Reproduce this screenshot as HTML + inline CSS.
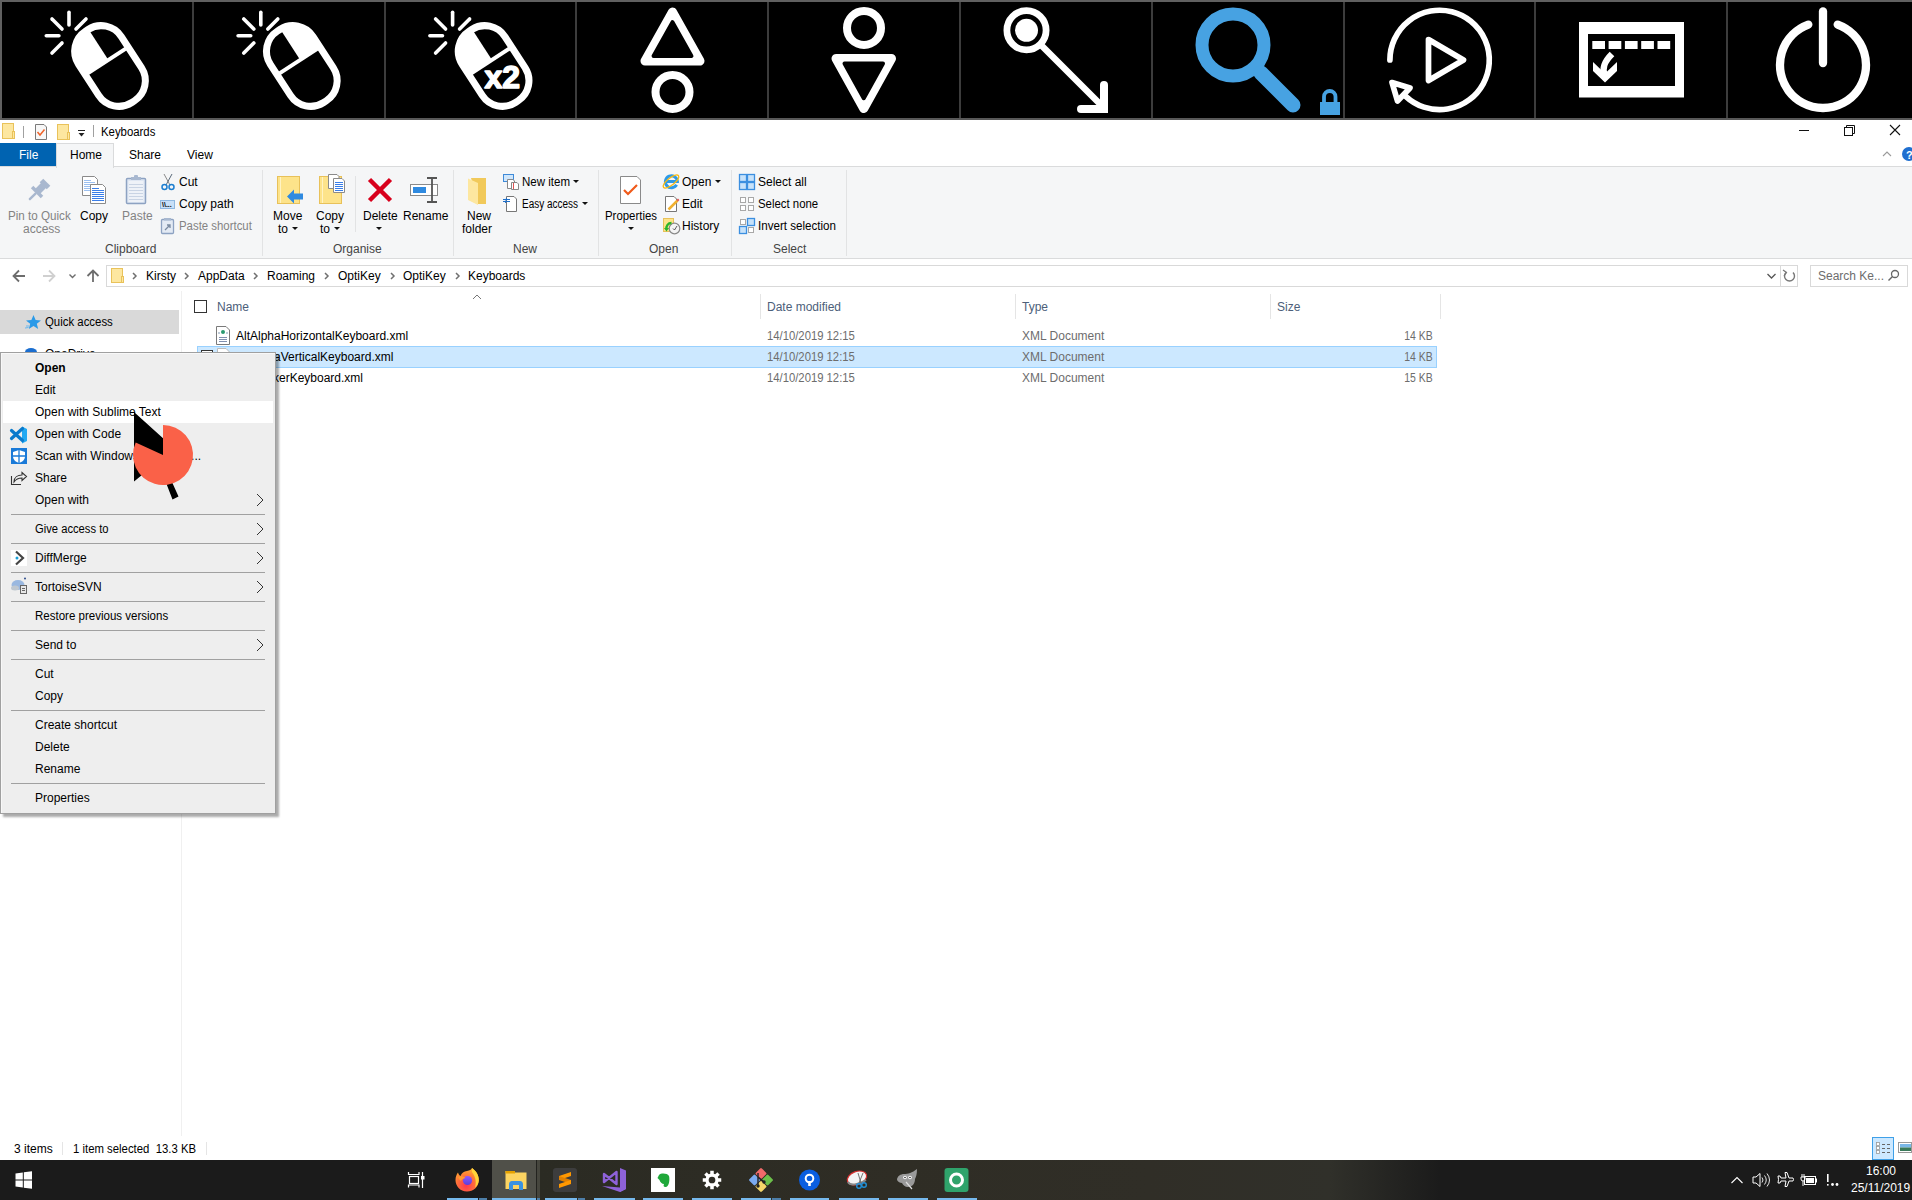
<!DOCTYPE html>
<html><head><meta charset="utf-8">
<style>
html,body{margin:0;padding:0;}
body{width:1912px;height:1200px;overflow:hidden;position:relative;background:#fff;font-family:"Liberation Sans",sans-serif;font-size:12px;color:#000;}
.a{position:absolute;}
.t{position:absolute;white-space:nowrap;line-height:14px;}
</style></head><body>

<!-- ===== OptiKey top bar ===== -->
<svg class="a" style="left:0;top:0" width="1912" height="120" viewBox="0 0 1912 120">
<rect x="0" y="0" width="1912" height="120" fill="#000"/>
<rect x="0" y="0" width="1912" height="2" fill="#606060"/>
<rect x="0" y="118" width="1912" height="2" fill="#585858"/>
<rect x="0" y="0" width="2" height="120" fill="#606060"/>
<g fill="#3c3c3c">
<rect x="192" y="2" width="2" height="116"/><rect x="384" y="2" width="2" height="116"/><rect x="575" y="2" width="2" height="116"/>
<rect x="767" y="2" width="2" height="116"/><rect x="959" y="2" width="2" height="116"/><rect x="1151" y="2" width="2" height="116"/>
<rect x="1343" y="2" width="2" height="116"/><rect x="1534" y="2" width="2" height="116"/><rect x="1726" y="2" width="2" height="116"/>
</g>

<defs>
<clipPath id="mc"><rect x="-24" y="-41" width="48" height="82" rx="23"/></clipPath>
<g id="spark" stroke="#fff" stroke-width="3.6" stroke-linecap="round">
<line x1="69" y1="25" x2="69" y2="12.3"/><line x1="58.9" y1="35.8" x2="46.3" y2="35.8"/>
<line x1="62" y1="29" x2="52" y2="19"/><line x1="76" y1="29" x2="86" y2="19"/>
<line x1="62" y1="43" x2="52" y2="53"/>
</g>
<g id="mouseo">
<rect x="-25.5" y="-42.5" width="51" height="85" rx="24" fill="none" stroke="#fff" stroke-width="7"/>
<line x1="-25" y1="-6" x2="25" y2="-6" stroke="#fff" stroke-width="4"/>
</g>
</defs>
<!-- icon1 left click -->
<use href="#spark"/>
<g transform="translate(110,66) rotate(-33)">
<rect x="-30" y="-50" width="32" height="44" fill="#fff" clip-path="url(#mc)"/>
<use href="#mouseo"/>
</g>
<!-- icon2 right click -->
<use href="#spark" x="191.8"/>
<g transform="translate(301.8,66) rotate(-33)">
<rect x="2" y="-50" width="32" height="44" fill="#fff" clip-path="url(#mc)"/>
<use href="#mouseo"/>
</g>
<!-- icon3 double click -->
<use href="#spark" x="383.6"/>
<g transform="translate(493.6,66) rotate(-33)">
<rect x="-30" y="-50" width="32" height="44" fill="#fff" clip-path="url(#mc)"/>
<use href="#mouseo"/>
</g>
<text x="484.5" y="88" fill="#fff" stroke="#fff" stroke-width="1.5" stroke-linejoin="round" font-family="Liberation Sans" font-weight="bold" font-size="32">x2</text>
<!-- icon4 triangle up + circle -->
<g fill="none" stroke="#fff" stroke-width="8">
<circle cx="672.5" cy="92" r="17"/>
<circle cx="864" cy="28" r="17"/>
</g>
<g stroke-linejoin="round">
<polygon points="672.5,12 700,61 645,61" fill="#fff" stroke="#fff" stroke-width="9"/>
<polygon points="672.5,22.2 691.45,56 653.55,56" fill="#000" stroke="#000" stroke-width="4"/>
<polygon points="836,58.5 891.5,58.5 863.75,108.5" fill="#fff" stroke="#fff" stroke-width="9"/>
<polygon points="844.5,63.5 883,63.5 863.75,98.2" fill="#000" stroke="#000" stroke-width="4"/>
</g>
<!-- icon6 drag -->
<g fill="none" stroke="#fff">
<circle cx="1026.5" cy="30.3" r="19.6" stroke-width="6.8"/>
<line x1="1041" y1="45" x2="1104" y2="108" stroke-width="6.5"/>
<path d="M1081,109 L1104,109 L1104,85" stroke-width="8" stroke-linecap="round" stroke-linejoin="miter"/>
</g>
<circle cx="1026.5" cy="30.3" r="11.5" fill="#fff"/>
<!-- icon7 magnifier -->
<g fill="none" stroke="#47a2e2">
<circle cx="1233" cy="45" r="31" stroke-width="13"/>
<line x1="1261" y1="73" x2="1293" y2="105" stroke-width="15" stroke-linecap="round"/>
<path d="M1324,102 V96.75 A5.75,5.75 0 0 1 1335.5,96.75 V102" stroke-width="3.8"/>
</g>
<rect x="1320" y="102" width="20" height="13" fill="#47a2e2"/>
<!-- icon8 replay -->
<g fill="none" stroke="#fff" stroke-width="5.7" stroke-linecap="round" stroke-linejoin="round">
<path d="M1389.9,60 A49.7,49.7 0 1 1 1405.7,96.3"/>
<polygon points="1392,82.5 1410,88 1397.5,101"/>
<polygon points="1428.5,39.5 1463.5,60 1428.5,80.5"/>
</g>
<!-- icon9 keyboard -->
<rect x="1579" y="22" width="105" height="75.5" fill="#fff"/>
<rect x="1588" y="34" width="87" height="52" fill="#000"/>
<g fill="#fff">
<rect x="1592.3" y="41" width="12.7" height="8"/><rect x="1608.6" y="41" width="12.7" height="8"/><rect x="1624.9" y="41" width="12.7" height="8"/>
<rect x="1641.2" y="41" width="12.7" height="8"/><rect x="1657.5" y="41" width="12.7" height="8"/>
<polygon points="1593,62 1605,73.5 1617,62 1617,71 1605,82.5 1593,71"/>
</g>
<path d="M1612,54 C1604,62 1602,68 1604.5,75" fill="none" stroke="#fff" stroke-width="6.5"/>
<!-- icon10 power -->
<g fill="none" stroke="#fff" stroke-width="8.3" stroke-linecap="round">
<path d="M1837.7,24.6 A43,43 0 1 1 1808.3,24.6"/>
<line x1="1823" y1="11.5" x2="1823" y2="63"/>
</g>
</svg>

<!-- ===== Title bar ===== -->
<div class="t" style="left:101px;top:125px;transform:scaleX(0.948);transform-origin:0 0">Keyboards</div>
<div class="a" style="left:23px;top:126px;width:1px;height:12px;background:#a0a0a0"></div>
<div class="a" style="left:93px;top:125px;width:1px;height:12px;background:#a0a0a0"></div>
<svg class="a" style="left:0;top:120px" width="100" height="24" viewBox="0 120 100 24">
<g>
<rect x="2.5" y="123.5" width="11" height="15" fill="#fde7a0" stroke="#e9c25a"/>
<rect x="12.5" y="131.5" width="2" height="7" fill="#fde7a0" stroke="#e9c25a"/>
<rect x="57.5" y="124.5" width="11" height="15" fill="#fde7a0" stroke="#e9c25a"/>
<rect x="67.5" y="132.5" width="2" height="7" fill="#fde7a0" stroke="#e9c25a"/>
<path d="M35.5,124.5 H44 L46.5,127 V139.5 H35.5 Z" fill="#f7f7f7" stroke="#7a7a7a"/>
<path d="M37.5,132 L40,135 L44.5,129.5" fill="none" stroke="#f0642a" stroke-width="1.5"/>
<rect x="78" y="130" width="7" height="1" fill="#222"/>
<path d="M78.5,133 H84.5 L81.5,136.5 Z" fill="#222"/>
</g>
</svg>
<!-- window controls -->
<svg class="a" style="left:1790px;top:120px" width="122" height="46" viewBox="1790 120 122 46">
<rect x="1799" y="130" width="10" height="1" fill="#111"/>
<rect x="1844.5" y="127.5" width="8" height="8" fill="none" stroke="#111"/>
<path d="M1846.5,127.5 V125.5 H1854.5 V133.5 H1852.5" fill="none" stroke="#111"/>
<path d="M1890,125 L1900,135 M1900,125 L1890,135" stroke="#111" stroke-width="1.1"/>
<path d="M1883,156 L1887,152 L1891,156" fill="none" stroke="#9a9a9a" stroke-width="1.1"/>
<circle cx="1909" cy="154" r="7" fill="#1f6fd0"/>
<text x="1906" y="158.5" fill="#fff" font-family="Liberation Sans" font-weight="bold" font-size="11">?</text>
</svg>

<!-- ===== Tabs ===== -->
<div class="a" style="left:0;top:143px;width:56px;height:23px;background:#0063b1"></div>
<div class="t" style="left:19px;top:148px;color:#fff">File</div>
<div class="a" style="left:56px;top:143px;width:56px;height:24px;background:#f5f6f7;border:1px solid #dadbdc;border-bottom:none;z-index:2"></div>
<div class="t" style="left:70px;top:148px;z-index:3">Home</div>
<div class="t" style="left:129px;top:148px">Share</div>
<div class="t" style="left:187px;top:148px">View</div>

<!-- ===== Ribbon ===== -->
<div class="a" style="left:0;top:166px;width:1912px;height:91px;background:#f5f6f7;border-top:1px solid #dadbdc;border-bottom:1px solid #dadbdc;"></div>
<div class="a" style="left:262px;top:170px;width:1px;height:86px;background:#e2e3e4"></div>
<div class="a" style="left:453px;top:170px;width:1px;height:86px;background:#e2e3e4"></div>
<div class="a" style="left:598px;top:170px;width:1px;height:86px;background:#e2e3e4"></div>
<div class="a" style="left:731px;top:170px;width:1px;height:86px;background:#e2e3e4"></div>
<div class="a" style="left:846px;top:170px;width:1px;height:86px;background:#e2e3e4"></div>
<div class="a" style="left:355px;top:176px;width:1px;height:56px;background:#e2e3e4"></div>
<div id="rtext">
<div class="t" style="left:8px;top:209px;color:#838383;transform:scaleX(0.97);transform-origin:0 0">Pin to Quick</div>
<div class="t" style="left:23px;top:222px;color:#838383">access</div>
<div class="t" style="left:80px;top:209px">Copy</div>
<div class="t" style="left:122px;top:209px;color:#838383">Paste</div>
<div class="t" style="left:179px;top:175px">Cut</div>
<div class="t" style="left:179px;top:197px">Copy path</div>
<div class="t" style="left:179px;top:219px;color:#838383;transform:scaleX(0.95);transform-origin:0 0">Paste shortcut</div>
<div class="t" style="left:105px;top:242px;color:#444">Clipboard</div>
<div class="t" style="left:273px;top:209px">Move</div>
<div class="t" style="left:278px;top:222px">to</div>
<div class="t" style="left:316px;top:209px">Copy</div>
<div class="t" style="left:320px;top:222px">to</div>
<div class="t" style="left:363px;top:209px">Delete</div>
<div class="t" style="left:403px;top:209px">Rename</div>
<div class="t" style="left:333px;top:242px;color:#444">Organise</div>
<div class="t" style="left:467px;top:209px">New</div>
<div class="t" style="left:462px;top:222px">folder</div>
<div class="t" style="left:522px;top:175px;transform:scaleX(0.96);transform-origin:0 0">New item</div>
<div class="t" style="left:522px;top:197px;transform:scaleX(0.83);transform-origin:0 0">Easy access</div>
<div class="t" style="left:513px;top:242px;color:#444">New</div>
<div class="t" style="left:605px;top:209px;transform:scaleX(0.95);transform-origin:0 0">Properties</div>
<div class="t" style="left:682px;top:175px">Open</div>
<div class="t" style="left:682px;top:197px">Edit</div>
<div class="t" style="left:682px;top:219px">History</div>
<div class="t" style="left:649px;top:242px;color:#444">Open</div>
<div class="t" style="left:758px;top:175px">Select all</div>
<div class="t" style="left:758px;top:197px;transform:scaleX(0.95);transform-origin:0 0">Select none</div>
<div class="t" style="left:758px;top:219px;transform:scaleX(0.966);transform-origin:0 0">Invert selection</div>
<div class="t" style="left:773px;top:242px;color:#444">Select</div>
</div>

<!-- ribbon icons -->
<svg class="a" style="left:0;top:166px" width="860" height="92" viewBox="0 166 860 92">
<!-- pin -->
<g transform="translate(39,190) rotate(45)">
<rect x="-5" y="-11" width="10" height="5" fill="#a9b8cf"/>
<rect x="-3.5" y="-7" width="7" height="9" fill="#a9b8cf"/>
<rect x="-7" y="1" width="14" height="3.5" fill="#a9b8cf"/>
<rect x="-1.2" y="4" width="2.4" height="10" rx="1" fill="#a9b8cf"/>
</g>
<!-- copy -->
<path d="M82.5,176.5 H94.5 L97.5,179.5 V195.5 H82.5 Z" fill="#fff" stroke="#8a8a8a"/>
<g stroke="#9cc0f0" stroke-width="1"><line x1="84" y1="180.5" x2="91" y2="180.5"/><line x1="84" y1="182.5" x2="95" y2="182.5"/><line x1="84" y1="184.5" x2="95" y2="184.5"/><line x1="84" y1="186.5" x2="95" y2="186.5"/><line x1="84" y1="188.5" x2="95" y2="188.5"/><line x1="84" y1="190.5" x2="95" y2="190.5"/></g>
<path d="M90.5,184.5 H102.5 L105.5,187.5 V203.5 H90.5 Z" fill="#fff" stroke="#8a8a8a"/>
<g stroke="#3a7ee8" stroke-width="1"><line x1="92" y1="188.5" x2="99" y2="188.5"/><line x1="92" y1="190.5" x2="104" y2="190.5"/><line x1="92" y1="192.5" x2="104" y2="192.5"/><line x1="92" y1="194.5" x2="104" y2="194.5"/><line x1="92" y1="196.5" x2="104" y2="196.5"/><line x1="92" y1="198.5" x2="104" y2="198.5"/><line x1="92" y1="200.5" x2="104" y2="200.5"/></g>
<!-- paste -->
<rect x="126.5" y="178.5" width="19" height="25" rx="1" fill="#dfe7f3" stroke="#8da2c2" stroke-width="1.5"/>
<rect x="128.5" y="181" width="15" height="21" fill="#eef2f8"/>
<g stroke="#c9d4e4"><line x1="129" y1="184.5" x2="143" y2="184.5"/><line x1="129" y1="187.5" x2="143" y2="187.5"/><line x1="129" y1="190.5" x2="143" y2="190.5"/><line x1="129" y1="193.5" x2="143" y2="193.5"/><line x1="129" y1="196.5" x2="143" y2="196.5"/><line x1="129" y1="199.5" x2="143" y2="199.5"/></g>
<rect x="131" y="177" width="10" height="3" fill="#a8b8d0"/><rect x="134" y="175" width="4" height="3" rx="1" fill="#a8b8d0"/>
<!-- cut -->
<g fill="none"><line x1="164" y1="174" x2="170" y2="185" stroke="#8a8a8a"/><line x1="172" y1="174" x2="166" y2="185" stroke="#5a6a7a"/>
<circle cx="164.5" cy="187" r="2.5" stroke="#1e7fd0" stroke-width="1.5"/><circle cx="171.5" cy="187" r="2.5" stroke="#1e7fd0" stroke-width="1.5"/></g>
<!-- copy path -->
<rect x="160.5" y="200.5" width="14" height="8" fill="#c8e0f8" stroke="#8fb8e0"/>
<text x="162" y="207" font-family="Liberation Sans" font-size="7" font-weight="bold" fill="#000">\\...</text>
<!-- paste shortcut -->
<rect x="161.5" y="219.5" width="12" height="14" rx="1" fill="#e3eaf4" stroke="#8da2c2" stroke-width="1.3"/>
<rect x="164" y="218" width="7" height="2.5" fill="#a8b8d0"/>
<path d="M165,230 L170,225 M167,225 H170 V228" fill="none" stroke="#7a8aa0" stroke-width="1.3"/>
<!-- move to -->
<rect x="277.5" y="176.5" width="22" height="27" fill="#fde38a" stroke="#e8c15a"/>
<line x1="280.5" y1="177" x2="280.5" y2="203" stroke="#fff3c4"/>
<path d="M287,196.5 L294,189.5 V193.5 H303 V199.5 H294 V203.5 Z" fill="#2f8ae0"/>
<!-- copy to -->
<rect x="319.5" y="176.5" width="22" height="27" fill="#fde38a" stroke="#e8c15a"/>
<line x1="322.5" y1="177" x2="322.5" y2="203" stroke="#fff3c4"/>
<path d="M328.5,174.5 H337 L339,176.5 V188.5 H328.5 Z" fill="#fff" stroke="#8a8a8a"/>
<path d="M333.5,178.5 H342 L344.5,181 V192.5 H333.5 Z" fill="#fff" stroke="#8a8a8a"/>
<g stroke="#3a7ee8"><line x1="335" y1="182.5" x2="343" y2="182.5"/><line x1="335" y1="184.5" x2="343" y2="184.5"/><line x1="335" y1="186.5" x2="343" y2="186.5"/><line x1="335" y1="188.5" x2="343" y2="188.5"/><line x1="335" y1="190.5" x2="343" y2="190.5"/></g>
<!-- dropdown arrows -->
<g fill="#111">
<path d="M292,227 H298 L295,230 Z"/><path d="M334,227 H340 L337,230 Z"/><path d="M376,227 H382 L379,230 Z"/>
<path d="M573,180 H579 L576,183 Z"/><path d="M582,202 H588 L585,205 Z"/>
<path d="M628,227 H634 L631,230 Z"/><path d="M715,180 H721 L718,183 Z"/>
</g>
<!-- delete -->
<path d="M369.5,179.5 L390.5,200.5 M390.5,179.5 L369.5,200.5" stroke="#d8001c" stroke-width="4.5"/>
<!-- rename -->
<rect x="410.5" y="184.5" width="27" height="11" fill="#fff" stroke="#8a8a8a"/>
<rect x="413" y="187" width="13" height="6" fill="#2f8ae0"/>
<path d="M427,178 H437 M427,202 H437 M432,178 V202" stroke="#555" stroke-width="1.8" fill="none"/>
<!-- new folder -->
<path d="M471,178 H486 V204 H478 V202 Z" fill="#f1c95a"/>
<path d="M468,178.5 L478,183 V205 L468,200 Z" fill="#fde7a0"/>
<!-- new item -->
<rect x="503.5" y="174.5" width="10" height="7" fill="#cfe6fb" stroke="#3e8ad8"/>
<path d="M507.5,179.5 H513 L514.5,181 V188.5 H507.5 Z" fill="#fff" stroke="#888"/>
<path d="M511.5,182.5 H517 L518.5,184 V189.5 H511.5 Z" fill="#fff" stroke="#888"/>
<line x1="513.5" y1="183" x2="513.5" y2="189" stroke="#e05050"/>
<!-- easy access -->
<path d="M506.5,196.5 H514 L516.5,199 V211.5 H506.5 Z" fill="#fff" stroke="#777"/>
<g stroke="#1e6ec8"><line x1="503" y1="199.5" x2="510" y2="199.5"/><line x1="503" y1="201.5" x2="510" y2="201.5"/><line x1="506.5" y1="198" x2="505.5" y2="203"/></g>
<!-- properties -->
<path d="M620.5,176.5 H637 L640.5,180 V203.5 H620.5 Z" fill="#fff" stroke="#8a8a8a"/>
<path d="M624,190 L628,194 L637,185" fill="none" stroke="#f05a1a" stroke-width="2.2"/>
<!-- IE open -->
<path d="M676.6,184.8 A6,6 0 1 1 677.4,181.5 H666" fill="none" stroke="#2d9ae8" stroke-width="3"/>
<ellipse cx="671" cy="181.5" rx="9.5" ry="3.6" transform="rotate(-38 671 181.5)" fill="none" stroke="#f5b914" stroke-width="1.3"/>
<!-- edit -->
<path d="M665.5,196.5 H674 L676.5,199 V211.5 H665.5 Z" fill="#fff" stroke="#777"/>
<path d="M668.5,209.5 L677.5,200.5" stroke="#f0b030" stroke-width="2.5"/>
<rect x="677" y="199" width="2" height="2" fill="#e05050" transform="rotate(45 678 200)"/>
<!-- history -->
<rect x="663.5" y="218.5" width="10" height="13" fill="#fde38a" stroke="#e8c15a"/>
<circle cx="674.5" cy="228.5" r="5.3" fill="#f4f4f4" stroke="#8a8a8a" stroke-width="1.2"/>
<path d="M673,228.5 L674.5,230 L677,226" fill="none" stroke="#333" stroke-width="0.8"/>
<path d="M671.5,223 C668,223 666,226 666.5,229" fill="none" stroke="#2ab52a" stroke-width="2.4"/>
<path d="M664,228 L669,228 L666.5,231.5 Z" fill="#2ab52a"/>
<!-- select all -->
<g fill="#c7e2fa" stroke="#3b8fe0" stroke-width="1.3">
<rect x="739.5" y="174.5" width="7" height="7"/><rect x="747.5" y="174.5" width="7" height="7"/>
<rect x="739.5" y="182.5" width="7" height="7"/><rect x="747.5" y="182.5" width="7" height="7"/>
<rect x="747.5" y="218.5" width="7" height="7"/><rect x="739.5" y="226.5" width="7" height="7"/>
</g>
<g fill="#fff" stroke="#a8a8a8">
<rect x="740.5" y="197.5" width="5" height="5"/><rect x="748.5" y="197.5" width="5" height="5"/>
<rect x="740.5" y="205.5" width="5" height="5"/><rect x="748.5" y="205.5" width="5" height="5"/>
<rect x="740.5" y="219.5" width="5" height="5"/><rect x="748.5" y="227.5" width="5" height="5"/>
</g>
</svg>

<!-- ===== Address bar ===== -->
<svg class="a" style="left:0;top:259px" width="1912" height="32" viewBox="0 259 1912 32">
<g fill="none" stroke="#6d6d6d" stroke-width="1.8">
<path d="M13.5,276 H25 M19,270.5 L13.5,276 L19,281.5"/>
</g>
<g fill="none" stroke="#d0d0d0" stroke-width="1.8">
<path d="M43,276 H54.5 M49,270.5 L54.5,276 L49,281.5"/>
</g>
<path d="M69.5,274.5 L72.5,277.5 L75.5,274.5" fill="none" stroke="#6d6d6d" stroke-width="1.4"/>
<path d="M93,282 V271 M87.5,276 L93,270.5 L98.5,276" fill="none" stroke="#6d6d6d" stroke-width="1.8"/>
<rect x="106.5" y="265.5" width="1691" height="21" fill="#fff" stroke="#d9d9d9"/>
<line x1="1780.5" y1="266" x2="1780.5" y2="286" stroke="#d9d9d9"/>
<rect x="111.5" y="268.5" width="11" height="14" fill="#fde7a0" stroke="#e9c25a"/>
<rect x="121.5" y="276.5" width="2" height="6" fill="#fde7a0" stroke="#e9c25a"/>
<g fill="none" stroke="#707070" stroke-width="1.5">
<path d="M133,273 L136,276 L133,279"/><path d="M185,273 L188,276 L185,279"/><path d="M254,273 L257,276 L254,279"/>
<path d="M325,273 L328,276 L325,279"/><path d="M391,273 L394,276 L391,279"/><path d="M456,273 L459,276 L456,279"/>
</g>
<path d="M1767.5,274 L1771.5,278 L1775.5,274" fill="none" stroke="#555" stroke-width="1.3"/>
<path d="M1793,272.5 A5,5 0 1 1 1786,272.5" fill="none" stroke="#777" stroke-width="1.4"/>
<path d="M1783,270 L1786.5,272.5 L1784,276" fill="none" stroke="#777" stroke-width="1.2"/>
<rect x="1810.5" y="265.5" width="97" height="21" fill="#fff" stroke="#d9d9d9"/>
<circle cx="1895" cy="274" r="3.5" fill="none" stroke="#666" stroke-width="1.3"/>
<line x1="1892.5" y1="276.5" x2="1888.5" y2="280.5" stroke="#666" stroke-width="1.5"/>
</svg>
<div class="t" style="left:146px;top:269px">Kirsty</div>
<div class="t" style="left:198px;top:269px">AppData</div>
<div class="t" style="left:267px;top:269px">Roaming</div>
<div class="t" style="left:338px;top:269px">OptiKey</div>
<div class="t" style="left:403px;top:269px">OptiKey</div>
<div class="t" style="left:468px;top:269px">Keyboards</div>
<div class="t" style="left:1818px;top:269px;color:#6d6d6d">Search Ke...</div>

<!-- ===== Nav pane ===== -->
<div class="a" style="left:0;top:310px;width:179px;height:24px;background:#d9d9d9"></div>
<svg class="a" style="left:20px;top:310px" width="30" height="50" viewBox="20 310 30 50">
<path d="M33.5,315 L35.6,320 L41,320.4 L36.8,323.8 L38.2,329 L33.5,326.1 L28.8,329 L30.2,323.8 L26,320.4 L31.4,320 Z" fill="#2a9ae8"/>
<path d="M26,326 L29,326 M25,328 L28.5,327.5" stroke="#6ab8f0" stroke-width="1"/>
<ellipse cx="31" cy="352" rx="6" ry="4" fill="#1a6ed0"/>
</svg>
<div class="t" style="left:45px;top:315px;transform:scaleX(0.95);transform-origin:0 0">Quick access</div>
<div class="t" style="left:45px;top:347px">OneDrive</div>
<div class="a" style="left:181px;top:291px;width:1px;height:845px;background:#f0f0f0"></div>

<!-- ===== File list ===== -->
<div class="a" style="left:194px;top:300px;width:11px;height:11px;border:1px solid #333;background:#fff"></div>
<div class="t" style="left:217px;top:300px;color:#4c607a">Name</div>
<svg class="a" style="left:470px;top:290px" width="14" height="10" viewBox="470 290 14 10"><path d="M473,299 L477,295 L481,299" fill="none" stroke="#777" stroke-width="1"/></svg>
<div class="a" style="left:760px;top:294px;width:1px;height:25px;background:#e5e5e5"></div>
<div class="a" style="left:1015px;top:294px;width:1px;height:25px;background:#e5e5e5"></div>
<div class="a" style="left:1270px;top:294px;width:1px;height:25px;background:#e5e5e5"></div>
<div class="a" style="left:1440px;top:294px;width:1px;height:25px;background:#e5e5e5"></div>
<div class="t" style="left:767px;top:300px;color:#4c607a">Date modified</div>
<div class="t" style="left:1022px;top:300px;color:#4c607a">Type</div>
<div class="t" style="left:1277px;top:300px;color:#4c607a">Size</div>

<div class="a" style="left:197px;top:346px;width:1238px;height:20px;background:#cce8ff;border:1px solid #99d1ff"></div>
<svg class="a" style="left:200px;top:325px" width="40" height="65" viewBox="200 325 40 65">
<path d="M216.5,326.5 H226 L229.5,330 V344.5 H216.5 Z" fill="#fff" stroke="#7a7a7a"/>
<circle cx="223" cy="332" r="2" fill="#2a9a70"/>
<path d="M219.5,332 L218.5,333 L219.5,334 M226.5,332 L227.5,333 L226.5,334" fill="none" stroke="#6080a0" stroke-width="0.8"/>
<g stroke="#8090b0" stroke-width="1"><line x1="219" y1="337.5" x2="227" y2="337.5"/><line x1="219" y1="339.5" x2="227" y2="339.5"/><line x1="219" y1="341.5" x2="227" y2="341.5"/></g>
</svg>
<div class="a" style="left:201px;top:350px;width:10px;height:10px;border:1.5px solid #333;background:#fff"></div>
<svg class="a" style="left:215px;top:347px" width="16" height="18" viewBox="215 347 16 18"><path d="M217.5,348.5 H226 L229.5,352 V364.5 H217.5 Z" fill="#fff" stroke="#bbb"/></svg>
<div class="t" style="left:236px;top:329px">AltAlphaHorizontalKeyboard.xml</div>
<div class="t" style="left:236px;top:350px">AltAlphaVerticalKeyboard.xml</div>
<div class="t" style="right:1549px;top:371px">AltAlphaSpeakerKeyboard.xml</div>
<div class="t" style="left:767px;top:329px;color:#6d6d6d;transform:scaleX(0.94);transform-origin:0 0">14/10/2019 12:15</div>
<div class="t" style="left:767px;top:350px;color:#6d6d6d;transform:scaleX(0.94);transform-origin:0 0">14/10/2019 12:15</div>
<div class="t" style="left:767px;top:371px;color:#6d6d6d;transform:scaleX(0.94);transform-origin:0 0">14/10/2019 12:15</div>
<div class="t" style="left:1022px;top:329px;color:#6d6d6d">XML Document</div>
<div class="t" style="left:1022px;top:350px;color:#6d6d6d">XML Document</div>
<div class="t" style="left:1022px;top:371px;color:#6d6d6d">XML Document</div>
<div class="t" style="right:479px;top:329px;color:#6d6d6d;transform:scaleX(0.87);transform-origin:100% 0">14 KB</div>
<div class="t" style="right:479px;top:350px;color:#6d6d6d;transform:scaleX(0.87);transform-origin:100% 0">14 KB</div>
<div class="t" style="right:479px;top:371px;color:#6d6d6d;transform:scaleX(0.87);transform-origin:100% 0">15 KB</div>

<!-- ===== Status bar ===== -->
<div class="t" style="left:14px;top:1142px">3 items</div>
<div class="a" style="left:62px;top:1142px;width:1px;height:13px;background:#e5e5e5"></div>
<div class="t" style="left:73px;top:1142px;transform:scaleX(0.946);transform-origin:0 0">1 item selected&nbsp; 13.3 KB</div>
<div class="a" style="left:206px;top:1142px;width:1px;height:13px;background:#e5e5e5"></div>
<svg class="a" style="left:1870px;top:1136px" width="42" height="24" viewBox="1870 1136 42 24">
<rect x="1872.5" y="1137.5" width="21" height="22" fill="#cce8ff" stroke="#3fa0e8"/>
<g fill="#fff" stroke="#999" stroke-width="0.8"><rect x="1876.5" y="1142.5" width="3" height="3"/><rect x="1876.5" y="1146.5" width="3" height="3"/><rect x="1876.5" y="1150.5" width="3" height="3"/></g>
<g stroke="#666" stroke-width="1"><line x1="1882" y1="1144.5" x2="1885" y2="1144.5"/><line x1="1887" y1="1144.5" x2="1890" y2="1144.5"/><line x1="1882" y1="1148.5" x2="1885" y2="1148.5"/><line x1="1887" y1="1148.5" x2="1890" y2="1148.5"/><line x1="1882" y1="1152.5" x2="1885" y2="1152.5"/><line x1="1887" y1="1152.5" x2="1890" y2="1152.5"/></g>
<rect x="1898.5" y="1142.5" width="13" height="10" fill="#fff" stroke="#999"/>
<rect x="1900" y="1144" width="11" height="3.5" fill="#7ab8e8"/><rect x="1900" y="1147.5" width="11" height="3.5" fill="#3a7a5a"/>
</svg>

<!-- ===== Context menu ===== -->
<div class="a" style="left:0;top:352px;width:274px;height:460px;background:#eeeeee;border:1px solid #a0a0a0;box-shadow:3px 3px 2px rgba(0,0,0,0.33), inset 1px 1px 0 #f8f8f8;z-index:10">
<div class="a" style="left:2px;top:48px;width:270px;height:22px;background:#fff"></div>
<div class="t" style="left:34px;top:8px;font-weight:bold">Open</div>
<div class="t" style="left:34px;top:30px">Edit</div>
<div class="t" style="left:34px;top:52px">Open with Sublime Text</div>
<div class="t" style="left:34px;top:74px">Open with Code</div>
<div class="t" style="left:34px;top:96px">Scan with Windows Defender...</div>
<div class="t" style="left:34px;top:118px">Share</div>
<div class="t" style="left:34px;top:140px">Open with</div>
<div class="t" style="left:34px;top:169px;transform:scaleX(0.934);transform-origin:0 0">Give access to</div>
<div class="t" style="left:34px;top:198px">DiffMerge</div>
<div class="t" style="left:34px;top:227px">TortoiseSVN</div>
<div class="t" style="left:34px;top:256px;transform:scaleX(0.96);transform-origin:0 0">Restore previous versions</div>
<div class="t" style="left:34px;top:285px">Send to</div>
<div class="t" style="left:34px;top:314px">Cut</div>
<div class="t" style="left:34px;top:336px">Copy</div>
<div class="t" style="left:34px;top:365px">Create shortcut</div>
<div class="t" style="left:34px;top:387px">Delete</div>
<div class="t" style="left:34px;top:409px">Rename</div>
<div class="t" style="left:34px;top:438px">Properties</div>
<svg class="a" style="left:0;top:0" width="274" height="460" viewBox="1 353 274 460">
<g fill="#a0a0a0">
<rect x="11" y="514" width="254" height="1"/><rect x="11" y="543" width="254" height="1"/><rect x="11" y="572" width="254" height="1"/>
<rect x="11" y="601" width="254" height="1"/><rect x="11" y="630" width="254" height="1"/><rect x="11" y="659" width="254" height="1"/>
<rect x="11" y="710" width="254" height="1"/><rect x="11" y="783" width="254" height="1"/>
</g>
<g fill="none" stroke="#333" stroke-width="1">
<path d="M257,494 L263,500 L257,506"/><path d="M257,523 L263,529 L257,535"/><path d="M257,552 L263,558 L257,564"/>
<path d="M257,581 L263,587 L257,593"/><path d="M257,639 L263,645 L257,651"/>
</g>
<!-- vscode icon -->
<path d="M22,426.5 L27,429 V441 L22,443.5 Z" fill="#23a9f2"/>
<path d="M11.5,430.5 L22.5,440.5 M11.5,438.5 L22.5,428.5" stroke="#0a7acc" stroke-width="3.2" stroke-linecap="round"/>
<!-- defender icon -->
<rect x="11" y="448" width="16" height="16" fill="#1a7ad8"/>
<path d="M19,450 L25,452 V456 C25,460 22,462 19,463 C16,462 13,460 13,456 V452 Z" fill="#fff"/>
<path d="M19,450 V463 M13,456 H25" stroke="#1a7ad8" stroke-width="1.3"/>
<!-- share icon -->
<path d="M11.5,476 V484.5 H21" fill="none" stroke="#333" stroke-width="1.1"/>
<path d="M14,482 C14,477 18,475 22,475 V472.5 L26.5,476.5 L22,480.5 V478 C19,478 16,479 14,482 Z" fill="none" stroke="#333" stroke-width="1.1"/>
<!-- diffmerge icon -->
<rect x="11" y="550" width="16" height="16" fill="#fff"/>
<path d="M16,551.5 L23,558 L16,564.5" fill="none" stroke="#444" stroke-width="2.2"/>
<circle cx="17" cy="558" r="1.5" fill="#1aa0d8"/>
<!-- tortoisesvn icon -->
<ellipse cx="18" cy="585" rx="6.5" ry="5" fill="#9ab8e0"/>
<ellipse cx="15" cy="588" rx="4" ry="2.5" fill="#c0c8d0"/>
<rect x="20.5" y="585.5" width="6" height="8" fill="#e8e8e8" stroke="#666"/>
<line x1="22" y1="588.5" x2="25" y2="588.5" stroke="#666"/><line x1="22" y1="590.5" x2="25" y2="590.5" stroke="#666"/>
<circle cx="25" cy="578.5" r="1" fill="#2a4a8a"/>
</svg>
</div>

<!-- ===== Gaze cursor ===== -->
<svg class="a" style="left:120px;top:400px;z-index:20" width="90" height="110" viewBox="120 400 90 110">
<polygon points="134,412 134,481.5 158,462 172.5,499.5 178.5,496.5 163,462 186,459" fill="#000"/>
<path d="M163,455 L163,425 A30,30 0 1 1 135.7,442.6 Z" fill="#fa6148"/>
</svg>

<!-- ===== Taskbar ===== -->
<div class="a" style="left:0;top:1160px;width:1912px;height:40px;background:linear-gradient(to right,#1b1b1b 0px,#1b1b1b 536px,#2b2b23 537px,#2f2d25 900px,#302e27 1150px,#30302a 1330px,#1b1b1b 1440px,#1b1b1b 1912px)"></div>
<div class="a" style="left:492px;top:1160px;width:44px;height:40px;background:#505049"></div>
<div class="a" style="left:537px;top:1160px;width:3px;height:40px;background:#46463e"></div>
<svg class="a" style="left:0;top:1160px" width="1912" height="40" viewBox="0 1160 1912 40">
<!-- windows logo -->
<path d="M15.5,1173.5 L22.8,1172.5 V1179.6 H15.5 Z M23.8,1172.3 L32,1171.3 V1179.6 H23.8 Z M15.5,1180.5 H22.8 V1187.6 L15.5,1186.6 Z M23.8,1180.5 H32 V1188.8 L23.8,1187.8 Z" fill="#fff"/>
<!-- task view -->
<path d="M408.5,1172 V1174.5 H419 V1172 M408.5,1187.5 V1185 H419 V1187.5" fill="none" stroke="#fff" stroke-width="1.2"/>
<rect x="409.5" y="1176.5" width="9" height="7" fill="none" stroke="#fff" stroke-width="1.2"/>
<line x1="422.5" y1="1172" x2="422.5" y2="1188" stroke="#fff" stroke-width="1.2"/>
<rect x="421" y="1176" width="3.5" height="3.5" fill="#fff"/>
<!-- firefox -->
<defs>
<radialGradient id="ffg" cx="0.45" cy="0.75" r="0.8"><stop offset="0" stop-color="#ff3750"/><stop offset="0.5" stop-color="#ff7139"/><stop offset="1" stop-color="#ffbd2e"/></radialGradient>
<linearGradient id="ffp" x1="0" y1="0" x2="0" y2="1"><stop offset="0" stop-color="#9059ff"/><stop offset="1" stop-color="#5b3ed8"/></linearGradient>
</defs>
<path d="M472,1168 C476,1171 479,1175 478.8,1180.5 C478.5,1187 473.5,1191.5 467,1191.5 C460,1191.5 455.5,1186 455.5,1180 C455.5,1177 456.5,1174.5 458,1172.5 C458.5,1174.5 459.5,1175.5 460.5,1176 C461.5,1173 464,1171.5 467,1171 C469.5,1170.5 471.5,1169.5 472,1168 Z" fill="url(#ffg)"/>
<path d="M472,1168 C476,1171 479,1175 478.8,1180.5 C478.5,1183 477,1186 475,1187.5 C476.5,1183 476,1177 472,1172 Z" fill="#ffd43a"/>
<circle cx="467.5" cy="1180.5" r="4.6" fill="url(#ffp)"/>
<path d="M458,1177 C460,1175.5 463.5,1176 465.5,1178 C463,1178.5 461.5,1179.5 461,1181 C459.5,1180 458.5,1178.5 458,1177 Z" fill="#ff9a2e"/>
<!-- explorer -->
<path d="M505.5,1171 H514 L515,1172.5 H526.5 V1189 H505.5 Z" fill="#fcd462"/>
<rect x="505.5" y="1171" width="9.5" height="2.5" fill="#e5a100"/>
<path d="M509,1190 V1184.5 Q509,1181 512,1181 H520 Q523,1181 523,1184.5 V1190 H519 V1185 H513 V1190 Z" fill="#3a92e0"/>
<!-- sublime -->
<rect x="553" y="1168" width="24" height="24" rx="3" fill="#3d3d3d"/>
<path d="M559,1176 L571,1172 V1176 L559,1180 Z" fill="#ff9800"/><path d="M559,1176 L571,1180 V1184 L559,1180 Z" fill="#e08000"/><path d="M559,1184 L571,1180 V1184 L559,1188 Z" fill="#ff9800"/>
<!-- visual studio -->
<path d="M620,1168 L626,1170.5 V1189 L620,1192 Z" fill="#8e62d9"/>
<path d="M602,1186 L620,1187.5 L626,1189 L620,1192 Z" fill="#8e62d9"/>
<path d="M604,1174 L616.5,1184 V1172 L604,1182 Z" fill="none" stroke="#8e62d9" stroke-width="2.4" stroke-linejoin="round"/>
<!-- evernote -->
<rect x="651" y="1168" width="24" height="24" fill="#fff"/>
<path transform="translate(1,0)" d="M658,1175 C660,1173 666,1173 668,1176 C669,1180 668,1186 665,1187 C663,1187.5 662,1186 663,1184 C661,1184 659,1182 658.5,1180 L656.5,1178 Z" fill="#1fa83a"/>
<!-- settings gear -->
<g transform="translate(712,1180) scale(0.88)">
<circle r="7.5" fill="#fff"/>
<g fill="#fff"><rect x="-2" y="-10.5" width="4" height="21"/><rect x="-2" y="-10.5" width="4" height="21" transform="rotate(45)"/><rect x="-2" y="-10.5" width="4" height="21" transform="rotate(90)"/><rect x="-2" y="-10.5" width="4" height="21" transform="rotate(135)"/></g>
<circle r="3.8" fill="#2e2c25"/>
</g>
<!-- git -->
<g transform="translate(761,1180) scale(0.8) rotate(45)">
<rect x="-11" y="-11" width="10.5" height="10.5" rx="1.5" fill="#f06a6a"/>
<rect x="0.5" y="-11" width="10.5" height="10.5" rx="1.5" fill="#6cbf4a"/>
<rect x="-11" y="0.5" width="10.5" height="10.5" rx="1.5" fill="#7aaaf0"/>
<rect x="0.5" y="0.5" width="10.5" height="10.5" rx="1.5" fill="#f5d76a"/>
</g>
<path d="M758,1173 V1187 M758,1177 L764,1182" stroke="#222" stroke-width="1.4" fill="none"/>
<circle cx="758" cy="1186" r="1.7" fill="#222"/><circle cx="764" cy="1182" r="1.7" fill="#222"/>
<!-- blue circle key -->
<circle cx="809.5" cy="1180" r="10.5" fill="#0a5ee0"/>
<circle cx="809.5" cy="1178.5" r="3.8" fill="none" stroke="#fff" stroke-width="2"/>
<rect x="808.2" y="1181" width="2.6" height="5" fill="#fff"/>
<!-- snip -->
<ellipse cx="857" cy="1178" rx="10" ry="6.5" transform="rotate(-20 857 1178)" fill="#f4f4f4" stroke="#d83030" stroke-width="1.2"/>
<path d="M848,1182 C850,1186 858,1185 866,1180" fill="none" stroke="#888" stroke-width="2"/>
<path d="M858,1173 L861,1183 M863,1173 L859,1183" stroke="#555" stroke-width="0.8"/>
<circle cx="859" cy="1186" r="2.3" fill="none" stroke="#2090d8" stroke-width="1.4"/><circle cx="864" cy="1185" r="2.3" fill="none" stroke="#2090d8" stroke-width="1.4"/>
<!-- gimp -->
<path d="M897,1180 C897,1176 901,1174 904,1174 C908,1174 912,1173 917,1169 C917,1174 916,1177 915,1179 C915,1184 912,1187 908,1187 C905,1187 903,1185 902,1183 C900,1183 898,1182 897,1180 Z" fill="#9a9a9a"/>
<circle cx="905" cy="1177.5" r="1.8" fill="#fff"/><circle cx="910" cy="1177.5" r="1.8" fill="#fff"/>
<circle cx="905" cy="1177.5" r="0.8" fill="#222"/><circle cx="910" cy="1177.5" r="0.8" fill="#222"/>
<path d="M906,1182 L912,1189" stroke="#ddd" stroke-width="1.2"/>
<!-- green -->
<rect x="944.5" y="1168" width="24" height="24" rx="3" fill="#2fa36b"/>
<circle cx="956.5" cy="1180" r="6" fill="none" stroke="#fff" stroke-width="3"/>
<!-- underlines -->
<g fill="#76b9ed">
<rect x="447" y="1198" width="31" height="2"/><rect x="492" y="1198" width="44" height="2"/><rect x="545" y="1198" width="32" height="2"/>
<rect x="594" y="1198" width="41" height="2"/><rect x="643" y="1198" width="40" height="2"/><rect x="692" y="1198" width="40" height="2"/>
<rect x="741" y="1198" width="30" height="2"/><rect x="790" y="1198" width="39" height="2"/><rect x="839" y="1198" width="40" height="2"/>
<rect x="888" y="1198" width="40" height="2"/><rect x="937" y="1198" width="40" height="2"/>
</g>
<g fill="#4d7ea8">
<rect x="479" y="1198" width="8" height="2"/><rect x="537" y="1198" width="3" height="2"/><rect x="578" y="1198" width="7" height="2"/><rect x="772" y="1198" width="9" height="2"/>
</g>
<!-- tray -->
<path d="M1731.5,1183 L1737,1177.5 L1742.5,1183" fill="none" stroke="#fff" stroke-width="1.1"/>
<path d="M1753,1177 H1756 L1760,1173.5 V1186.5 L1756,1183 H1753 Z" fill="none" stroke="#fff" stroke-width="1"/>
<path d="M1762,1177.5 Q1764,1180 1762,1182.5 M1764.5,1175.5 Q1768,1180 1764.5,1184.5 M1767,1173.5 Q1772,1180 1767,1186.5" fill="none" stroke="#fff" stroke-width="0.9"/>
<path d="M1785,1172.5 L1787,1172.5 L1789,1178 L1793,1178 Q1794,1179.5 1793,1181 L1789,1181 L1787,1186.5 L1785,1186.5 L1786,1181 L1781,1181 L1780,1183 L1778,1183 L1778.5,1179.5 L1778,1176 L1780,1176 L1781,1178 L1786,1178 Z" fill="none" stroke="#fff" stroke-width="1"/>
<rect x="1804.5" y="1176.5" width="11" height="8" fill="none" stroke="#fff" stroke-width="1"/>
<rect x="1815.5" y="1178.5" width="1.5" height="4" fill="#fff"/>
<rect x="1806" y="1178" width="8" height="5" fill="#fff"/>
<path d="M1802,1174 V1177 M1804,1174 V1177 M1801,1177 H1805 V1179 Q1805,1181 1803,1181 Q1801,1181 1801,1179 Z M1803,1181 V1186" fill="none" stroke="#fff" stroke-width="1"/>
<rect x="1827" y="1174" width="1.6" height="8" fill="#fff"/>
<circle cx="1832.5" cy="1184.5" r="1.4" fill="#fff"/><circle cx="1837" cy="1184.5" r="1.4" fill="#fff"/><rect x="1827" y="1184" width="1.6" height="1.6" fill="#fff"/>
</svg>
<div class="t" style="left:1866px;top:1164px;color:#fff;font-size:12px">16:00</div>
<div class="t" style="left:1851px;top:1181px;color:#fff;font-size:12px">25/11/2019</div>

</body></html>
